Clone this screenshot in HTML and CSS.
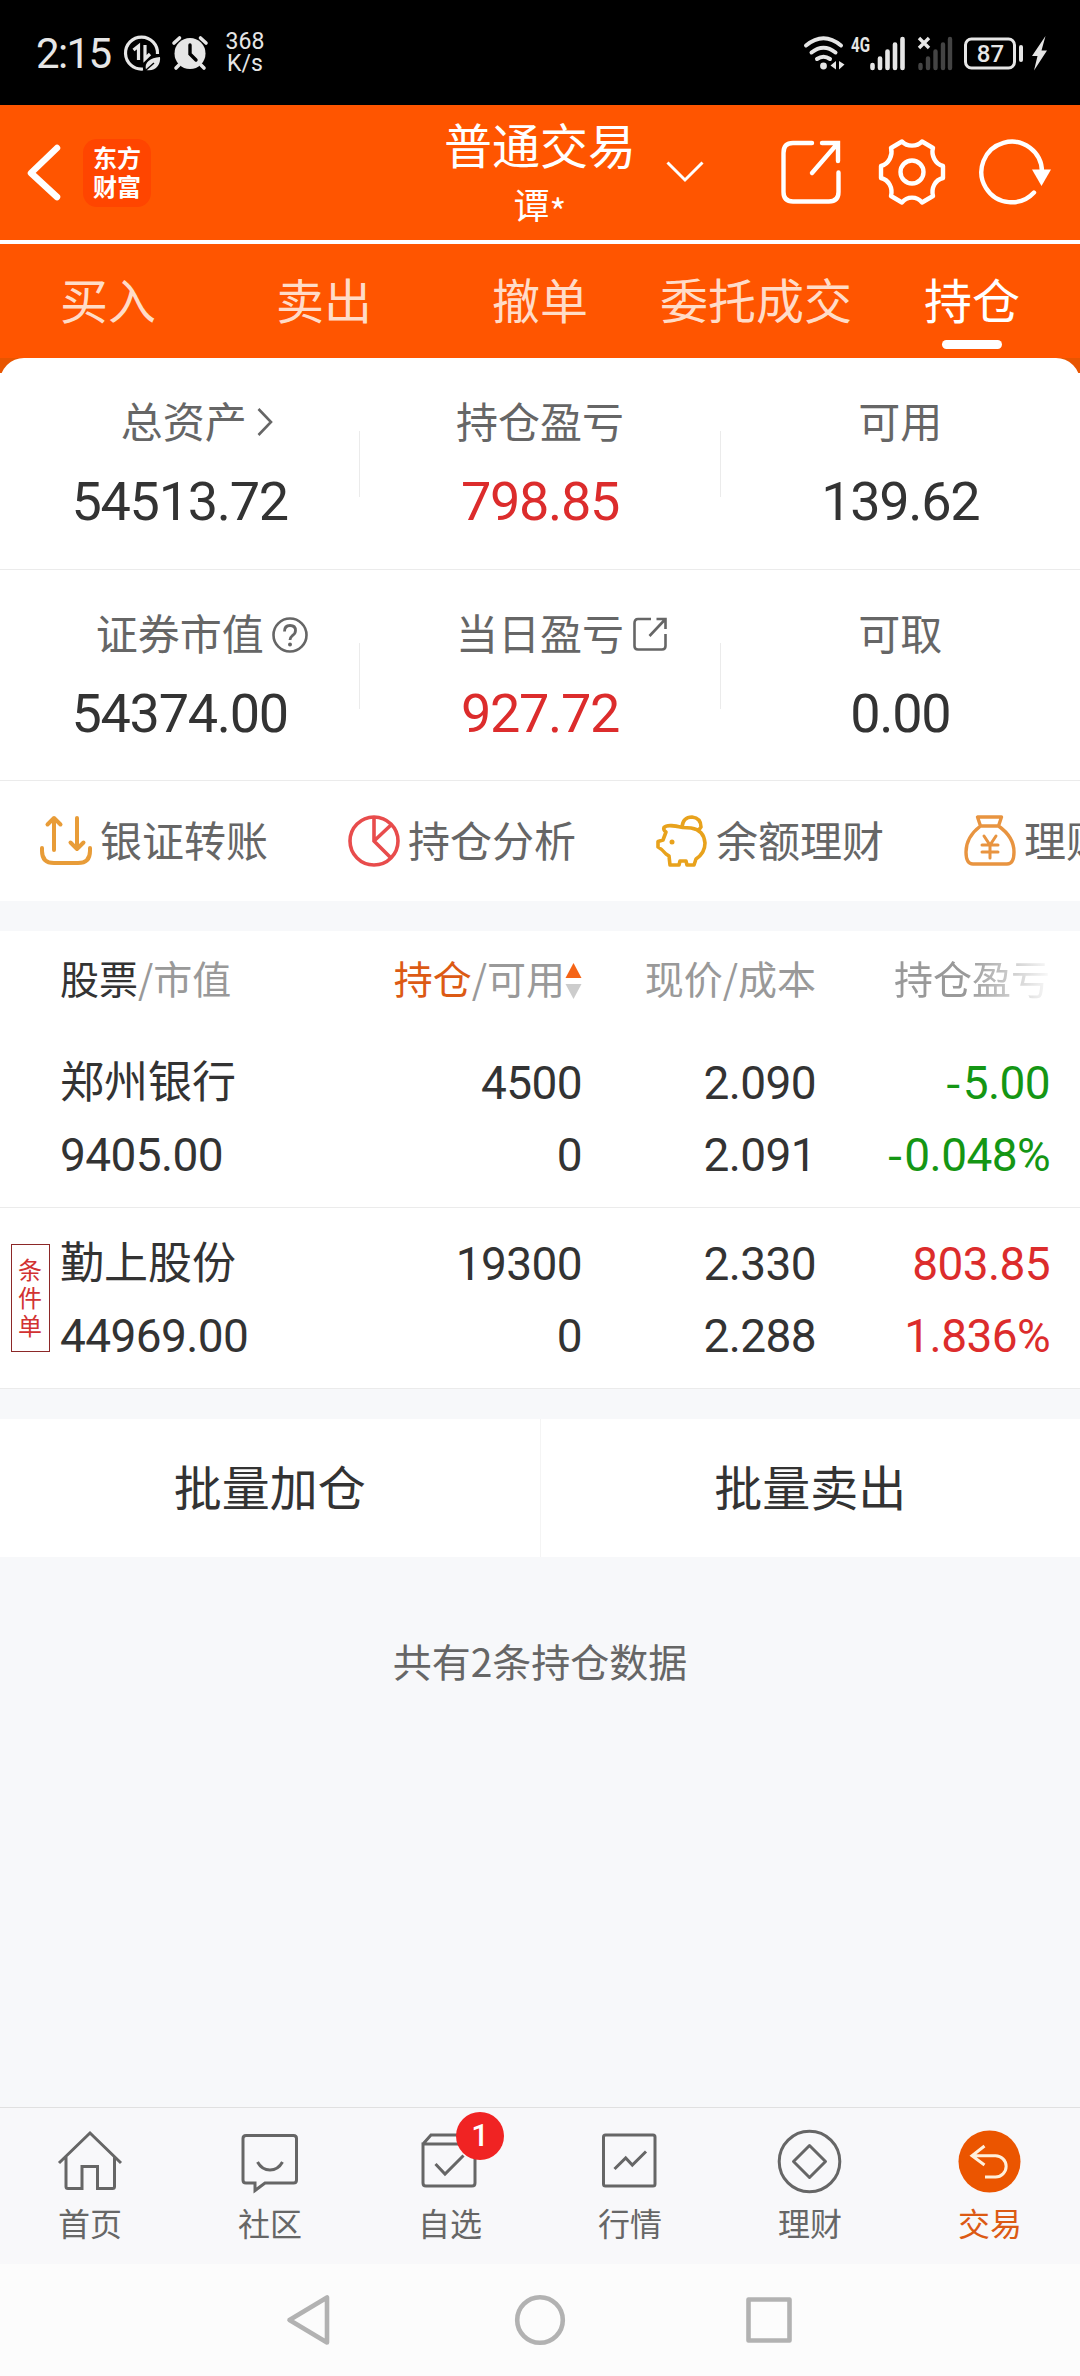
FILE: index.html
```html
<!DOCTYPE html>
<html lang="zh-CN">
<head>
    <meta charset="UTF-8">
    <meta name="viewport" content="width=device-width, initial-scale=1.0">
    <title>普通交易 - 持仓</title>
    <link rel="stylesheet" href="styles.css">
</head>
<body>
    <div class="statusbar">
        <span class="time">2:15</span>
        <svg class="icon-data" width="38" height="38" viewBox="0 0 38 38">
            <path d="M34.5 20A16 16 0 1 0 20 35" fill="none" stroke="#e6e6e6" stroke-width="3.2"/>
            <path d="M10.5 16L15.5 12V26M22 11V25L27 20" fill="none" stroke="#e6e6e6" stroke-width="3.2"/>
            <path d="M23 36C21 28 27 24 37 23C38 31 32 38 23 36Z" fill="#e6e6e6"/>
            <path d="M23 36L31 29" stroke="#000" stroke-width="1.4"/>
        </svg>
        <svg class="icon-alarm" width="36" height="36" viewBox="0 0 36 36">
            <circle cx="18" cy="18.5" r="15.5" fill="#e6e6e6"/>
            <path d="M2 8L7.5 3M34 8L28.5 3M7 30L4 33M29 30L32 33" stroke="#e6e6e6" stroke-width="3.6" stroke-linecap="round"/>
            <path d="M18 10V19L24 25" fill="none" stroke="#000" stroke-width="3.4" stroke-linecap="round"/>
        </svg>
        <div class="speed"><span>368</span><span>K/s</span></div>
        <div class="status-right">
            <svg width="42" height="36" viewBox="0 0 42 36">
                <path d="M2 10.500Q19.500 -4 37 10.500M7.500 17.500Q19.500 8 31.500 17.500M13 24Q19.500 19.500 26 24" fill="none" stroke="#e6e6e6" stroke-width="4" stroke-linecap="round"/>
                <circle cx="19.500" cy="31" r="3.400" fill="#e6e6e6"/>
                <path d="M32 26V34.500L26.500 30.500ZM35 26L40.500 29.500L35 34.500Z" fill="#e6e6e6"/>
            </svg>
            <svg class="icon-4g" width="56" height="36" viewBox="0 0 56 36">
                <text x="0" y="17" font-size="21" font-weight="700" fill="#e6e6e6" textLength="19" lengthAdjust="spacingAndGlyphs">4G</text>
                <path d="M21.500 30V33M29 23.500V33M36.500 16.500V33M44 9.500V33M51.500 4V33" stroke="#e6e6e6" stroke-width="4.600" stroke-linecap="round"/>
            </svg>
            <svg class="icon-nosim" width="38" height="36" viewBox="0 0 38 36">
                <path d="M3.500 30V33M11 23.500V33M18.500 16.500V33M26 9.500V33M33 4V33" stroke="#444" stroke-width="4.400" stroke-linecap="round"/>
                <path d="M2 3L12 13M12 3L2 13" stroke="#e6e6e6" stroke-width="3.400"/>
            </svg>
            <svg class="icon-battery" width="62" height="36" viewBox="0 0 62 36">
                <rect x="2.500" y="4" width="49" height="29" rx="6" fill="none" stroke="#e6e6e6" stroke-width="3"/>
                <rect x="56" y="10" width="4" height="17" rx="2" fill="#e6e6e6"/>
                <text x="27.500" y="27" font-size="24" font-weight="500" text-anchor="middle" fill="#e6e6e6">87</text>
            </svg>
            <svg class="icon-bolt" width="16" height="36" viewBox="0 0 16 36">
                <path d="M13.500 1L0 21H5.500L2 35.500L15 15.500H9.500Z" fill="#e6e6e6"/>
            </svg>
        </div>
    </div>

    <div class="header">
        <div class="header-left">
            <svg width="36" height="60" viewBox="0 0 36 60">
                <path d="M31 5L5 30L31 54" fill="none" stroke="#fff" stroke-width="6.500" stroke-linecap="round" stroke-linejoin="round"/>
            </svg>
            <div class="logo"><span>东方</span><span>财富</span></div>
        </div>
        <div class="header-title">
            <span class="title">普通交易</span>
            <span class="account">谭<span class="star">*</span></span>
        </div>
        <div class="header-right">
            <svg class="icon-down" width="38" height="22" viewBox="0 0 38 22">
                <path d="M1.500 1.500L19 19L36.500 1.500" fill="none" stroke="#fff" stroke-width="3"/>
            </svg>
            <svg class="icon-share" width="60" height="66" viewBox="0 0 60 66">
                <path d="M31 4H12Q2.500 4 2.500 14V53Q2.500 62.500 12 62.500H48Q57.500 62.500 57.500 53V33.500M41 4H57V22M57 4L31 34" fill="none" stroke="#fff" stroke-width="4.400" stroke-linecap="round"/>
            </svg>
            <svg class="icon-gear" width="68" height="68" viewBox="0 0 68 68">
                <path d="M24 3.500C29 9 39 9 44 3.500L55 10C53 17 57 26 65 28V40C57 42 53 50 55 58L44 64.500C39 58 29 58 24 64.500L13 58C15 50 11 42 3 40V28C11 26 15 17 13 10Z" fill="none" stroke="#fff" stroke-width="4.400" stroke-linejoin="round"/>
                <circle cx="34" cy="34" r="11.500" fill="none" stroke="#fff" stroke-width="4.400"/>
            </svg>
            <svg class="icon-refresh" width="72" height="68" viewBox="0 0 72 68">
                <path d="M54 54.500A30.300 30.300 0 1 1 62 34" fill="none" stroke="#fff" stroke-width="4.400" stroke-linecap="round"/>
                <path d="M52 31.500H71L61.500 48Z" fill="#fff"/>
            </svg>
        </div>
    </div>

    <div class="tabs">
        <div class="tab">买入</div>
        <div class="tab">卖出</div>
        <div class="tab">撤单</div>
        <div class="tab">委托成交</div>
        <div class="tab active">持仓</div>
    </div>

    <div class="summary-wrap">
        <div class="summary">
            <div class="summary-row first">
                <div class="cell">
                    <div class="label asset">总资产
                        <svg class="icon-more" width="16" height="30" viewBox="0 0 16 30">
                            <path d="M1.500 2L14 15L1.500 28" fill="none" stroke="#666" stroke-width="2.600"/>
                        </svg>
                    </div>
                    <div class="value">54513.72</div>
                </div>
                <div class="divider"></div>
                <div class="cell">
                    <div class="label">持仓盈亏</div>
                    <div class="value red">798.85</div>
                </div>
                <div class="divider"></div>
                <div class="cell">
                    <div class="label">可用</div>
                    <div class="value">139.62</div>
                </div>
            </div>
            <div class="summary-row">
                <div class="cell">
                    <div class="label">证券市值
                        <svg class="icon-help" width="36" height="36" viewBox="0 0 36 36">
                            <circle cx="18" cy="18" r="16.500" fill="none" stroke="#666" stroke-width="2.600"/>
                            <path d="M12.500 14.500Q12.500 8.500 18 8.500Q23.500 8.500 23.500 13.500Q23.500 16.500 20.500 18.500Q18 20.500 18 23" fill="none" stroke="#666" stroke-width="2.800"/>
                            <circle cx="18" cy="27.500" r="2" fill="#666"/>
                        </svg>
                    </div>
                    <div class="value">54374.00</div>
                </div>
                <div class="divider"></div>
                <div class="cell">
                    <div class="label">当日盈亏
                        <svg class="icon-open" width="36" height="36" viewBox="0 0 36 36">
                            <path d="M19 3H6Q2.500 3 2.500 7V30Q2.500 33.500 6 33.500H30Q33.500 33.500 33.500 30V18M24.500 3H33.500V13M33.500 3L17.500 20" fill="none" stroke="#666" stroke-width="2.600"/>
                        </svg>
                    </div>
                    <div class="value red">927.72</div>
                </div>
                <div class="divider"></div>
                <div class="cell">
                    <div class="label">可取</div>
                    <div class="value">0.00</div>
                </div>
            </div>
            <div class="shortcuts">
                <div class="shortcut">
                    <svg width="52" height="52" viewBox="0 0 52 52">
                        <path d="M2 33V36Q2 48 14 48H38Q50 48 50 36V33M14 35V3M7.500 9.500L14 3L20.500 9.500M37 3V34M30.500 27.500L37 34L43.500 27.500" fill="none" stroke="#e89c38" stroke-width="4" stroke-linecap="round" stroke-linejoin="round"/>
                    </svg>
                    <span>银证转账</span>
                </div>
                <div class="shortcut">
                    <svg width="52" height="52" viewBox="0 0 52 52">
                        <path d="M26 2V26L43 43M26 26L43 10" fill="none" stroke="#e84c4c" stroke-width="3.600"/>
                        <circle cx="26" cy="26" r="24" fill="none" stroke="#e84c4c" stroke-width="3.600"/>
                    </svg>
                    <span>持仓分析</span>
                </div>
                <div class="shortcut">
                    <svg width="52" height="52" viewBox="0 0 52 52">
                        <path d="M27 12.500C20 11 11 9 8 12.500Q7 15 10 17L7 25L2 26.500V32Q6 34 10 39L13 41L14 50H23L24 46H30L31 50H38L40 44Q49 38 49 28Q48 15 35 13ZM26 12Q27 2 36 2Q45 3 45 12Q44 14 42 15" fill="none" stroke="#e8a21c" stroke-width="3.600" stroke-linejoin="round"/>
                        <circle cx="16" cy="27" r="2.500" fill="#e8a21c"/>
                    </svg>
                    <span>余额理财</span>
                </div>
                <div class="shortcut">
                    <svg width="52" height="52" viewBox="0 0 52 52">
                        <path d="M13.500 2H37.500L34.500 11H16.500ZM16.500 11Q2 22 2 37Q2 49 9 49H43Q50 49 50 37Q50 22 34.500 11" fill="none" stroke="#e89440" stroke-width="3.400" stroke-linejoin="round"/>
                        <path d="M20 21L26 30L32 21M26 30V43M18 30H34M18 37H34" fill="none" stroke="#e89440" stroke-width="3" stroke-linecap="round"/>
                    </svg>
                    <span>理财</span>
                </div>
            </div>
        </div>
    </div>

    <div class="holdings">
        <div class="row table-head">
            <div class="gutter"></div>
            <div class="c1"><b>股票</b>/市值</div>
            <div class="c2"><b class="sorted">持仓</b>/可用<svg width="17" height="36" viewBox="0 0 17 36">
                    <path d="M8.500 0L16.500 15H0.500Z" fill="#f56416"/>
                    <path d="M0.500 21H16.500L8.500 36Z" fill="#ccc"/>
                </svg></div>
            <div class="c3">现价/成本</div>
            <div class="c4 fade">持仓盈亏</div>
        </div>
        <div class="row">
            <div class="gutter"></div>
            <div class="c1"><div class="name">郑州银行</div><div class="num">9405.00</div></div>
            <div class="c2"><div class="num">4500</div><div class="num">0</div></div>
            <div class="c3"><div class="num">2.090</div><div class="num">2.091</div></div>
            <div class="c4 green"><div class="num"><span class="minus">-</span>5.00</div><div class="num"><span class="minus">-</span>0.048%</div></div>
        </div>
        <div class="row">
            <div class="gutter"><div class="tag">条件单</div></div>
            <div class="c1"><div class="name">勤上股份</div><div class="num">44969.00</div></div>
            <div class="c2"><div class="num">19300</div><div class="num">0</div></div>
            <div class="c3"><div class="num">2.330</div><div class="num">2.288</div></div>
            <div class="c4 red"><div class="num">803.85</div><div class="num">1.836%</div></div>
        </div>
    </div>

    <div class="batch">
        <div class="batch-button">批量加仓</div>
        <div class="batch-button">批量卖出</div>
    </div>

    <div class="count">共有2条持仓数据</div>

    <div class="tabbar">
        <div class="tabbar-item">
            <svg width="64" height="64" viewBox="0 0 64 64">
                <path d="M1 34L32 4L63 34M8 28V57.500Q8 59.500 10 59.500H24V37.500H39.500V59.500H54.500Q56.500 59.500 56.500 57.500V28"/>
            </svg>
            <span>首页</span>
        </div>
        <div class="tabbar-item">
            <svg width="64" height="64" viewBox="0 0 64 64">
                <path d="M8 6.500H55.500Q58.500 6.500 58.500 9.500V51Q58.500 54 55.500 54H27L17 61.500V54H8Q5 54 5 51V9.500Q5 6.500 8 6.500ZM19.500 33Q24 41 32 41Q40 41 44.500 33"/>
            </svg>
            <span>社区</span>
        </div>
        <div class="tabbar-item">
            <svg width="64" height="64" viewBox="0 0 64 64">
                <path d="M5 15V54Q5 57 8 57H54Q57 57 57 54V15ZM5 15L13 6H49L57 15M17.500 35L27 45L45.500 26.500"/>
            </svg>
            <span>自选</span>
            <div class="badge">1</div>
        </div>
        <div class="tabbar-item">
            <svg width="64" height="64" viewBox="0 0 64 64">
                <rect x="5.500" y="6" width="51.500" height="51" rx="2"/>
                <path d="M16.500 40L27.700 29L34.300 36L48 22.500"/>
            </svg>
            <span>行情</span>
        </div>
        <div class="tabbar-item">
            <svg width="64" height="64" viewBox="0 0 64 64">
                <circle cx="31.500" cy="32.500" r="30.300"/>
                <path d="M31.500 16.500L47.500 32.500L31.500 48.500L15.500 32.500Z" stroke-linejoin="round"/>
            </svg>
            <span>理财</span>
        </div>
        <div class="tabbar-item current">
            <svg width="64" height="64" viewBox="0 0 64 64">
                <circle class="disc" cx="31.500" cy="32.500" r="31"/>
                <path class="arrow" d="M26.500 17L14 26.700L26.500 36M14 26.700H37.500A10.600 10.600 0 0 1 37.500 48H27"/>
            </svg>
            <span>交易</span>
        </div>
    </div>

    <div class="sysnav">
        <svg width="52" height="52" viewBox="0 0 52 52">
            <path d="M45 3.500V48.500L7.500 26Z"/>
        </svg>
        <svg width="52" height="52" viewBox="0 0 52 52">
            <circle cx="26" cy="26" r="22.800"/>
        </svg>
        <svg width="52" height="52" viewBox="0 0 52 52">
            <rect x="2.500" y="5.500" width="41" height="41"/>
        </svg>
    </div>
</body>
</html>
```

FILE: styles.css
```css
* {
    box-sizing: border-box;
}
body {
    margin: 0;
    width: 1080px;
    height: 2376px;
    overflow: hidden;
    display: flex;
    flex-direction: column;
    background-color: #f7f8fa;
    color: #333;
    font-family: "Noto Sans CJK SC", sans-serif;
}
svg {
    display: block;
    flex-shrink: 0;
    overflow: visible;
}
.red {
    color: #dc2c2c;
}
.green {
    color: #149614;
}

/* status bar */
.statusbar {
    height: 105px;
    padding: 0 32px 0 36px;
    display: flex;
    align-items: center;
    background-color: #000;
    color: #e6e6e6;
    font-family: Roboto, sans-serif;
}
.time {
    width: 87px;
    font-size: 42px;
    line-height: 60px;
    letter-spacing: -1.6px;
    padding-top: 3px;
}
.icon-alarm {
    margin-left: 11px;
}
.speed {
    width: 40px;
    margin-left: 17px;
    display: flex;
    flex-direction: column;
    align-items: center;
    font-size: 23px;
    line-height: 22px;
    padding-top: 1px;
}
.status-right {
    margin-left: auto;
    display: flex;
    align-items: center;
}
.icon-4g {
    margin-left: 5px;
}
.icon-nosim {
    margin-left: 10px;
}
.icon-battery {
    margin-left: 8px;
}
.icon-bolt {
    margin-left: 7px;
}

/* header */
.header {
    height: 139px;
    border-bottom: 4px solid #fff;
    background-color: #ff5500;
    color: #fff;
    display: grid;
    grid-template-columns: 1fr 192px 1fr;
}
.header-left {
    display: flex;
    align-items: center;
    padding-left: 26px;
}
.logo {
    width: 68px;
    height: 68px;
    margin-left: 21px;
    padding-top: 3px;
    border-radius: 14px;
    background-color: #ff4500;
    display: flex;
    flex-direction: column;
    align-items: center;
    font-size: 24px;
    font-weight: 700;
    line-height: 29px;
}
.header-title {
    display: flex;
    flex-direction: column;
    align-items: center;
    padding-top: 8px;
    white-space: nowrap;
}
.title {
    font-size: 48px;
    line-height: 60px;
}
.account {
    font-size: 36px;
    line-height: 60px;
}
.star {
    position: relative;
    top: 7px;
}
.header-right {
    display: flex;
    align-items: center;
    padding-bottom: 1px;
}
.icon-down {
    margin-left: 30px;
}
.icon-share {
    margin-left: 77px;
}
.icon-gear {
    margin-left: 37px;
}
.icon-refresh {
    margin-left: 34px;
}

/* tabs */
.tabs {
    height: 114px;
    display: flex;
    background-color: #ff5500;
}
.tab {
    width: 216px;
    display: flex;
    flex-direction: column;
    align-items: center;
    font-size: 48px;
    line-height: 72px;
    padding-top: 18px;
    color: #ffdcc8;
}
.tab.active {
    color: #fff;
}
.tab.active::after {
    content: "";
    width: 60px;
    height: 9px;
    margin-top: 6px;
    border-radius: 5px;
    background-color: #fff;
}

/* assets */
.summary-wrap {
    background: linear-gradient(#e85500 15px, #fff 15px);
}
.summary {
    border-radius: 24px 24px 0 0;
    background-color: #fff;
}
.summary-row {
    height: 211px;
    display: flex;
    border-bottom: 1px solid #ebebeb;
}
.summary-row.first {
    height: 212px;
}
.cell {
    flex: 1;
    padding-top: 32px;
}
.label {
    display: flex;
    justify-content: center;
    align-items: center;
    font-size: 42px;
    line-height: 60px;
    color: #666;
}
.asset {
    padding-left: 8px;
}
.value {
    margin-top: 22px;
    text-align: center;
    font-family: Roboto, sans-serif;
    font-size: 54px;
    line-height: 60px;
    letter-spacing: -1.3px;
}
/* icons hang outside so that the label stays centred */
.icon-more {
    margin: 4px -26px 0 10px;
}
.icon-help {
    margin: 5px -44px 0 8px;
}
.icon-open {
    margin: 3px -44px 0 8px;
}
.divider {
    width: 1px;
    height: 66px;
    margin-top: 73px;
    background-color: #ebebeb;
}
.shortcuts {
    height: 120px;
    padding-left: 40px;
    display: flex;
    align-items: center;
    gap: 80px;
    overflow: hidden;
}
.shortcut {
    display: flex;
    align-items: center;
    gap: 8px;
    flex-shrink: 0;
    font-size: 42px;
    line-height: 60px;
    color: #666;
}
.shortcut span {
    padding-bottom: 4px;
}

/* holdings */
.holdings {
    margin-top: 30px;
    background-color: #fff;
}
.row {
    height: 181px;
    display: flex;
    padding-top: 16px;
    border-bottom: 1px solid #ebebeb;
    line-height: 72px;
}
.num {
    font-family: Roboto, sans-serif;
    font-size: 46px;
    letter-spacing: -0.6px;
    padding-top: 4px;
    margin-bottom: -4px;
}
.minus {
    font-family: "Noto Sans CJK SC", sans-serif;
    line-height: 1;
    margin-right: 2px;
}
.table-head {
    height: 96px;
    padding-top: 0;
    border-bottom: none;
    font-size: 39px;
    line-height: 92px;
    color: #999;
}
.table-head b {
    font-weight: 400;
    color: #333;
}
.table-head .sorted {
    color: #dc5a14;
}
.gutter {
    width: 60px;
}
.c1 {
    width: 260px;
}
.c2 {
    width: 262px;
    text-align: right;
}
.c3,
.c4 {
    width: 234px;
    text-align: right;
}
.table-head .c2 {
    display: flex;
    justify-content: flex-end;
}
.table-head svg {
    margin-top: 32px;
}
.fade {
    -webkit-mask-image: linear-gradient(to right, #000 64%, transparent 102%);
    mask-image: linear-gradient(to right, #000 64%, transparent 102%);
}
.name {
    font-size: 44px;
}
.tag {
    width: 39px;
    height: 108px;
    margin: 20px 0 0 11px;
    padding: 10px 6px 0;
    border: 1px solid #8c2828;
    color: #d23232;
    font-size: 24px;
    line-height: 28px;
}

/* batch buttons */
.batch {
    height: 138px;
    margin-top: 30px;
    display: flex;
    background-color: #fff;
}
.batch-button {
    flex: 1;
    text-align: center;
    font-size: 48px;
    line-height: 132px;
}
.batch-button:first-child {
    border-right: 1px solid #f4f4f4;
}
.count {
    margin-top: 73px;
    text-align: center;
    font-size: 39px;
    line-height: 60px;
    color: #666;
}

/* bottom tab bar */
.tabbar {
    height: 157px;
    margin-top: auto;
    display: flex;
    border-top: 1px solid #e0e0e0;
    background-color: #f8f8fa;
}
.tabbar-item {
    position: relative;
    width: 180px;
    display: flex;
    flex-direction: column;
    align-items: center;
    padding-top: 21px;
    font-size: 32px;
    line-height: 48px;
    color: #666;
}
.tabbar-item svg {
    fill: none;
    stroke: #666;
    stroke-width: 3;
    margin-bottom: 5px;
}
.tabbar-item.current {
    color: #dc5a14;
}
.tabbar-item .disc {
    fill: #eb5500;
    stroke: none;
}
.tabbar-item .arrow {
    stroke: #fff0dc;
}
.badge {
    position: absolute;
    left: 96px;
    top: 4px;
    width: 48px;
    height: 48px;
    border-radius: 50%;
    background-color: #f02323;
    color: #fff;
    text-align: center;
    font-family: Roboto, sans-serif;
    font-size: 31px;
    font-weight: 500;
    line-height: 48px;
}

/* system navigation */
.sysnav {
    height: 112px;
    display: flex;
    justify-content: center;
    align-items: center;
    gap: 180px;
    background-color: #fcfcfc;
}
.sysnav svg {
    fill: none;
    stroke: #b2b2b2;
    stroke-width: 4.6;
    stroke-linejoin: round;
}
```
